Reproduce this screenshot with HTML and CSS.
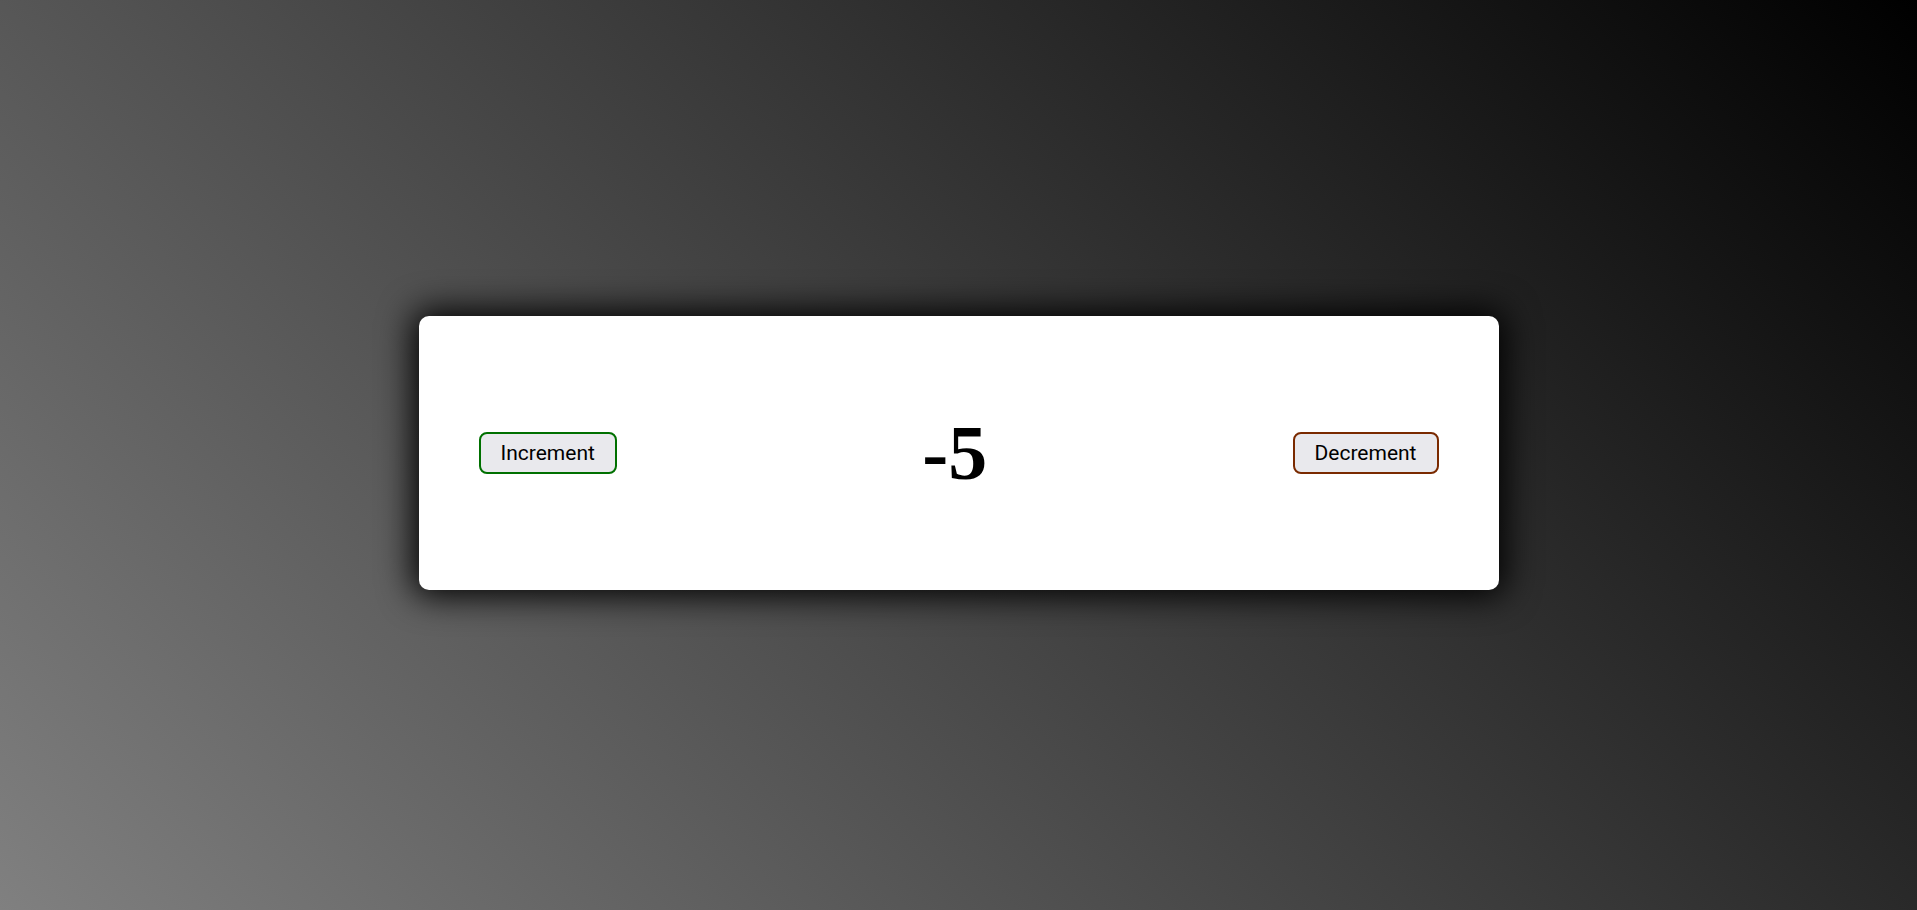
FILE: index.html
```html
<!DOCTYPE html>
<html>
<head>
<meta charset="utf-8">
<link rel="stylesheet" href="styles.css">
</head>
<body>
<main class="page">
  <div class="card">
    <button class="btn btn-inc">Increment</button>
    <h1 class="count">-5</h1>
    <button class="btn btn-dec">Decrement</button>
  </div>
</main>
</body>
</html>
```

FILE: styles.css
```css
html, body {
  margin: 0;
  height: 100%;
}
.page {
  height: 100%;
  display: flex;
  align-items: center;
  justify-content: center;
  background: linear-gradient(45deg, #808080, #000000);
}
.card {
  width: 1080px;
  height: 274px;
  box-sizing: border-box;
  padding: 0 60px;
  background: #fff;
  border-radius: 10px;
  box-shadow: 0 0 34px 6px #000;
  display: flex;
  align-items: center;
  justify-content: space-between;
  margin-top: -4px;
}
.count {
  margin: 0;
  font-family: "Liberation Serif", serif;
  font-weight: bold;
  font-size: 78px;
  line-height: 1;
  color: #000;
}
.btn {
  font-family: Roboto, sans-serif;
  font-size: 21px;
  height: 42px;
  padding: 0 20px;
  background: #e9e9ed;
  color: #000;
  border-radius: 8px;
  border: 2px solid;
}
.btn-inc { border-color: #007000; }
.btn-dec { border-color: #7a2a00; }
```
